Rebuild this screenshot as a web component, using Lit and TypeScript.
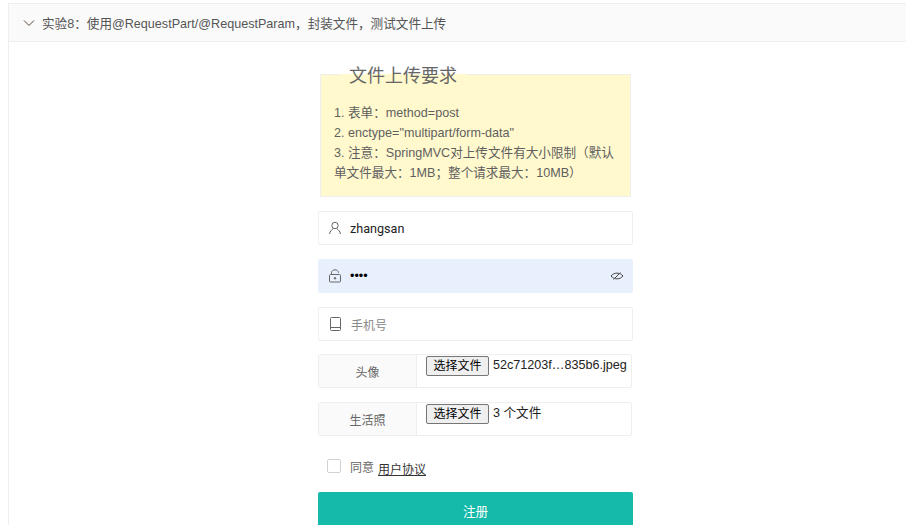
import { LitElement, html, css, svg } from "lit";
import { customElement } from "lit/decorators.js";

const stroke = (body: unknown, w = 16, h = 16) => html`<svg width=${w} height=${h} viewBox="0 0 ${w} ${h}" fill="none" stroke="currentColor" stroke-width="1">${body}</svg>`;

@customElement("app-root")
export class AppRoot extends LitElement {
  static styles = css`
    :host { display: block; height: 525px; overflow: hidden; background: #fff; font-family: "Liberation Sans", "Noto Sans CJK SC", sans-serif; font-size: 12.6px; color: #5f5f5f; box-sizing: border-box; padding: 3px 0 0 8px; }
    * { box-sizing: border-box; }
    .item { border-left: 1px solid #eee; border-top: 1px solid #eee; height: 600px; }
    .title { display: flex; align-items: center; height: 38px; background: #fafafa; border-bottom: 1px solid #eee; padding-left: 14px; gap: 7px; font-size: 12.6px; color: #555; }
    .title svg { color: #5a4a35; }
    .body { padding: 19px 0 0 309px; }
    .form { width: 315px; display: flex; flex-direction: column; }
    fieldset { margin: 0 2px; padding: 16px 13px 14px; border: 1px solid #eee; background: #fff9cd; height: 136px; line-height: 20px; min-width: 0; }
    legend { padding: 4px 10px 0; margin-left: 5px; font-size: 18px; line-height: 22px; color: #666; }
    .field { display: flex; align-items: center; height: 34px; margin-top: 14px; border: 1px solid #eee; border-radius: 2px; background: #fff; padding-left: 9px; }
    .field.filled { background: #e8f0fe; border-color: #e8f0fe; }
    .field .val { font-family: Roboto, sans-serif; color: #222; margin-left: 6px; font-size: 12.6px; }
    .field .dots { color: #000; letter-spacing: 0; margin-left: 6px; font-size: 12.6px; }
    .field .ph { color: #888; margin-left: 7px; font-size: 12px; }
    .field svg { color: #666; flex: none; }
    .eye { display: flex; margin-left: auto; margin-right: 8px; }
    .eye svg { color: #444; }
    .file { display: flex; height: 34px; width: 314px; margin-top: 14px; border: 1px solid #eee; border-radius: 2px; }
    .file.first { margin-top: 13px; }
    .label { flex: none; width: 98px; background: #fafafa; border-right: 1px solid #eee; display: flex; align-items: center; justify-content: center; font-size: 12px; color: #666; padding-top: 1px; }
    .pick { display: flex; align-items: flex-start; padding: 1px 0 0 9px; color: #222; gap: 4px; line-height: 18px; white-space: nowrap; font-size: 12.6px; }
    .btn { display: block; flex: none; width: 63px; height: 20px; background: #efefef; border: 1px solid #767676; border-radius: 2px; font-size: 12px; line-height: 18px; text-align: center; color: #000; }
    .agree { display: flex; align-items: center; height: 22px; margin-top: 19px; padding-left: 9px; font-size: 12px; color: #666; }
    .box { width: 14px; height: 14px; border: 1px solid #d2d2d2; border-radius: 2px; background: #fff; margin-right: 9px; }
    .agree a { color: #333; margin-left: 4px; text-decoration: underline; padding-top: 4px; }
    .submit { height: 38px; margin-top: 15px; padding-bottom: 2px; background: #16baaa; color: #fff; border-radius: 2px; display: flex; align-items: center; justify-content: center; font-size: 12.6px; }
  `;

  render() {
    return html`<div class="item">
      <div class="title">
        ${stroke(svg`<path d="M1 3.5 L6 8.5 L11 3.5"/>`, 12, 12)}
        <span>实验8：使用@RequestPart/@RequestParam，封装文件，测试文件上传</span>
      </div>
      <div class="body"><div class="form">
        <fieldset>
          <legend>文件上传要求</legend>
          <div>1. 表单：method=post</div>
          <div>2. enctype="multipart/form-data"</div>
          <div>3. 注意：SpringMVC对上传文件有大小限制（默认单文件最大：1MB；整个请求最大：10MB）</div>
        </fieldset>
        <div class="field">
          ${stroke(svg`<circle cx="7" cy="5.5" r="3.2"/><path d="M1.5 14 C2 11.5 3.5 9.8 5.2 8.6 M12.5 14 C12 11.5 10.5 9.8 8.8 8.6"/>`)}
          <span class="val">zhangsan</span>
        </div>
        <div class="field filled">
          ${stroke(svg`<rect x="1.5" y="6.5" width="11" height="7.5" rx="1"/><path d="M3.5 6.5 V4.8 C3.5 .8 10.5 .8 10.5 4.8"/><circle cx="7" cy="10.3" r=".8" fill="currentColor"/>`)}
          <span class="dots">••••</span>
          <span class="eye">${stroke(svg`<path d="M1 7 C4 3.2 10 3.2 13 7 C10 10.8 4 10.8 1 7 Z"/><path d="M3.5 10.5 L10.5 3.5"/>`, 14, 14)}</span>
        </div>
        <div class="field">
          ${stroke(svg`<rect x="2.5" y="1.5" width="10" height="13" rx="1"/><path d="M2.5 11.5 H12.5"/>`)}
          <span class="ph">手机号</span>
        </div>
        <div class="file first"><div class="label">头像</div><div class="pick"><span class="btn">选择文件</span><span>52c71203f…835b6.jpeg</span></div></div>
        <div class="file"><div class="label">生活照</div><div class="pick"><span class="btn">选择文件</span><span>3 个文件</span></div></div>
        <div class="agree"><span class="box"></span><span>同意</span><a>用户协议</a></div>
        <div class="submit">注册</div>
      </div></div>
    </div>`;
  }
}
